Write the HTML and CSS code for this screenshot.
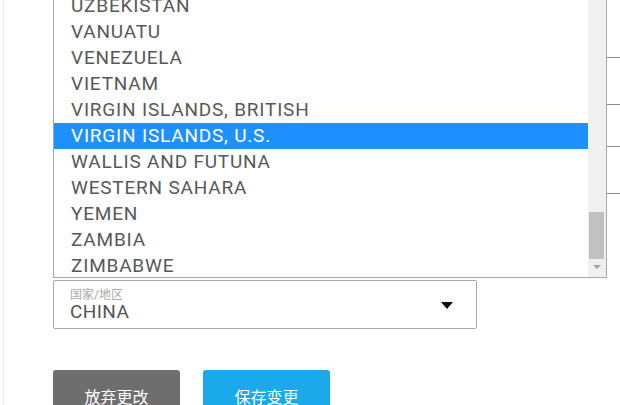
FILE: index.html
```html
<!DOCTYPE html>
<html lang="zh">
<head>
    <meta charset="UTF-8">
    <title>国家/地区</title>
    <link rel="stylesheet" href="styles.css">
</head>
<body>
    <div class="page">
        <div class="form">
            <div class="field-area">
                <div class="field field-a"></div>
                <div class="field field-b"></div>

                <div class="dropdown">
                    <ul class="options">
                        <li>UZBEKISTAN</li>
                        <li>VANUATU</li>
                        <li>VENEZUELA</li>
                        <li>VIETNAM</li>
                        <li>VIRGIN ISLANDS, BRITISH</li>
                        <li class="selected">VIRGIN ISLANDS, U.S.</li>
                        <li>WALLIS AND FUTUNA</li>
                        <li>WESTERN SAHARA</li>
                        <li>YEMEN</li>
                        <li>ZAMBIA</li>
                        <li>ZIMBABWE</li>
                    </ul>
                    <div class="scrollbar">
                        <div class="thumb"></div>
                        <div class="arrow"></div>
                    </div>
                </div>
            </div>

            <div class="select">
                <div class="select-text">
                    <span class="select-label">国家/地区</span>
                    <span class="select-value">CHINA</span>
                </div>
                <span class="caret"></span>
            </div>

            <div class="buttons">
                <button class="btn btn-cancel">放弃更改</button>
                <button class="btn btn-save">保存变更</button>
            </div>
        </div>
    </div>
</body>
</html>
```

FILE: styles.css
```css
body {
    margin: 0;
    background: #fff;
    font-family: Roboto, "Noto Sans CJK SC", sans-serif;
    overflow: hidden;
}

.page {
    height: 405px;
    margin-left: 3px;
    border-left: 1px solid #ececec;
    padding-left: 49px;
}

.field-area {
    position: relative;
    height: 280px;
    padding-top: 57px;
    box-sizing: border-box;
}

.field {
    width: 620px;
    height: 48px;
    border: 1px solid #8a8a8a;
    border-right: none;
    box-sizing: border-box;
}

.field-b {
    margin-top: 41px;
}

/* open list of countries, over the fields */
.dropdown {
    position: absolute;
    top: -7px;
    left: 0;
    width: 554px;
    height: 285px;
    display: flex;
    background: #fff;
    border: 1px solid #a8a8a8;
    border-top: none;
    box-sizing: border-box;
}

.options {
    flex: 1;
    list-style: none;
    margin: 0;
    padding: 0;
}

.options li {
    height: 26px;
    line-height: 26px;
    padding-left: 17px;
    font-size: 19px;
    color: #585858;
    letter-spacing: 0.8px;
    white-space: nowrap;
}

.options li.selected {
    background: #1e90ff;
    color: #fff;
}

.scrollbar {
    position: relative;
    width: 18px;
    background: #f0f0f0;
}

.thumb {
    position: absolute;
    left: 1px;
    right: 2px;
    top: 219px;
    height: 47px;
    background: #c1c1c1;
}

.arrow {
    position: absolute;
    left: 5px;
    bottom: 8px;
    border-left: 4px solid transparent;
    border-right: 4px solid transparent;
    border-top: 4px solid #a3a3a3;
}

.select {
    width: 424px;
    height: 49px;
    border: 1px solid #a8a8a8;
    border-radius: 2px;
    box-sizing: border-box;
    display: flex;
    align-items: center;
    justify-content: space-between;
    padding: 0 23px 0 16px;
}

.select-text {
    display: flex;
    flex-direction: column;
}

.select-label {
    font-size: 12px;
    line-height: 14px;
    color: #a9a9a9;
}

.select-value {
    font-size: 19px;
    line-height: 19px;
    color: #555;
    letter-spacing: 0.4px;
}

.caret {
    margin-top: 2px;
    border-left: 6px solid transparent;
    border-right: 6px solid transparent;
    border-top: 7px solid #111;
}

.buttons {
    display: flex;
    gap: 23px;
    margin-top: 41px;
}

.btn {
    width: 127px;
    height: 48px;
    border: none;
    border-radius: 3px;
    color: #fff;
    font-family: "Noto Sans CJK SC", sans-serif;
    font-size: 16px;
    padding-top: 4px;
}

.btn-cancel {
    background: #6e6e6e;
}

.btn-save {
    background: #1aa9eb;
}
```
